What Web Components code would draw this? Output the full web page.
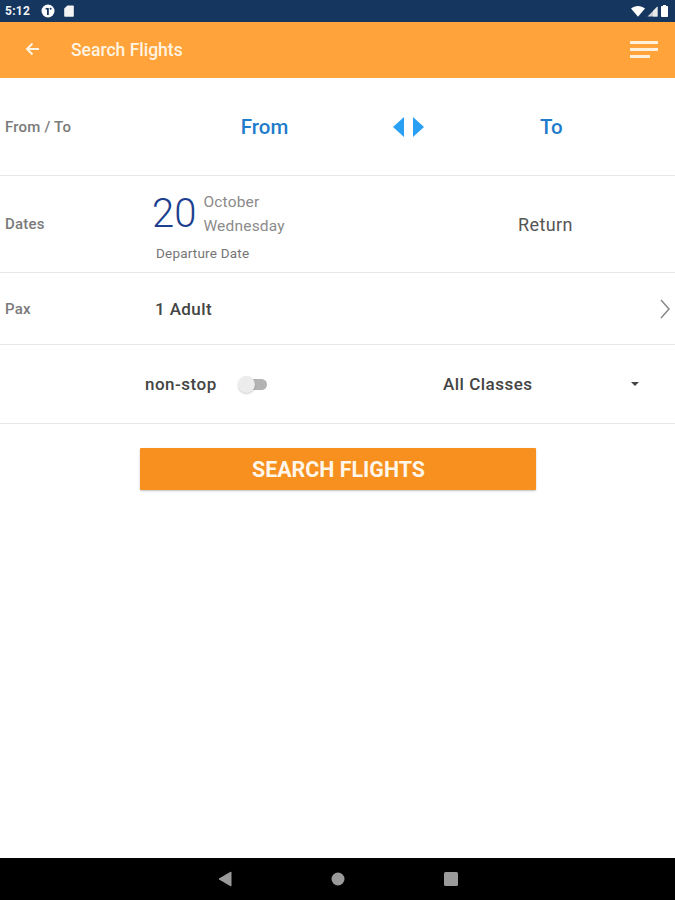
<!DOCTYPE html>
<html>
<head>
<meta charset="utf-8">
<title>Search Flights</title>
<style>
  html, body { margin: 0; height: 100%; }
  body { font-family: Roboto, "Liberation Sans", sans-serif; background: #fff; }
  #app { display: flex; flex-direction: column; height: 900px; overflow: hidden; }
</style>
</head>
<body>
<div id="app">
  <status-bar></status-bar>
  <app-bar>Search Flights</app-bar>
  <form-row label="From / To" height="98">
    <route-picker></route-picker>
  </form-row>
  <form-row label="Dates" height="97">
    <date-picker></date-picker>
  </form-row>
  <form-row label="Pax" height="72">
    <pax-picker></pax-picker>
  </form-row>
  <form-row height="79">
    <options-picker></options-picker>
  </form-row>
  <search-button>SEARCH FLIGHTS</search-button>
  <nav-bar></nav-bar>
</div>

<script>
class StatusBar extends HTMLElement {
  constructor() {
    super();
    this.attachShadow({ mode: "open" });
    this.shadowRoot.innerHTML = `
      <style>
        :host {
          display: flex;
          align-items: center;
          flex: none;
          height: 22px;
          padding: 0 7px 0 5px;
          box-sizing: border-box;
          background: #14365f;
          color: #f1f4f7;
        }
        .time { font-size: 12px; font-weight: 700; letter-spacing: .3px; width: 36px; }
        .left { display: flex; align-items: center; gap: 9px; }
        .right { display: flex; align-items: center; gap: 2px; margin-left: auto; }
        svg { display: block; }
      </style>
      <span class="time">5:12</span>
      <div class="left">
        <svg width="14" height="14" viewBox="0 0 14 14">
          <circle cx="7" cy="7" r="6.5" fill="#fff"/>
          <path d="M4.600 4h3.200v7H6V5.600H4.600z" fill="#14365f"/>
          <circle cx="9.600" cy="4.800" r="1" fill="#14365f"/>
        </svg>
        <svg width="10" height="12" viewBox="0 0 10 12">
          <path d="M3.400 0.500H9a.8.8 0 0 1 .8.8v9.600a.8.8 0 0 1-.8.8H1a.8.8 0 0 1-.8-.8V3.600z" fill="#f4f4f4"/>
        </svg>
      </div>
      <div class="right">
        <svg width="14" height="11" viewBox="0 0 14 11">
          <path d="M0 2.600C3.800-.8 10.200-.8 14 2.600L7 10.800z" fill="#fff"/>
        </svg>
        <svg width="11" height="11" viewBox="0 0 11 11">
          <path d="M10.500.5v10H.5z" fill="#c9ced4"/>
          <path d="M10.500.5v10H6V5z" fill="#e9e9e9"/>
        </svg>
        <svg width="7" height="12" viewBox="0 0 7 12" style="margin-left:1px">
          <path d="M2 0h3v1h1.200a.8.8 0 0 1 .8.8v9.400a.8.8 0 0 1-.8.800H.8a.8.8 0 0 1-.8-.8V1.800A.8.8 0 0 1 .8 1H2z" fill="#fff"/>
        </svg>
      </div>
    `;
  }
}
customElements.define("status-bar", StatusBar);

class AppBar extends HTMLElement {
  constructor() {
    super();
    this.attachShadow({ mode: "open" });
    this.shadowRoot.innerHTML = `
      <style>
        :host {
          display: flex;
          align-items: center;
          flex: none;
          height: 56px;
          padding: 0 17px 0 25px;
          box-sizing: border-box;
          background: #ffa33a;
          color: #fff3e2;
        }
        .title { font-size: 17.500px; font-weight: 500; margin-left: 31px; }
        .menu { margin-left: auto; display: block; }
        .back { display: block; margin-top: -2px; }
      </style>
      <svg class="back" width="15" height="14" viewBox="0 0 15 14" fill="none" stroke="#fff3e2" stroke-width="2">
        <path d="M14 7H2M7.500 1.500L2 7l5.500 5.500"/>
      </svg>
      <span class="title"><slot></slot></span>
      <svg class="menu" width="28" height="18" viewBox="0 0 28 18" fill="#fff0dc">
        <rect y="0" width="28" height="3"/>
        <rect y="7" width="28" height="3"/>
        <rect y="14" width="20" height="3"/>
      </svg>
    `;
  }
}
customElements.define("app-bar", AppBar);

class FormRow extends HTMLElement {
  constructor() {
    super();
    this.attachShadow({ mode: "open" });
    const label = this.getAttribute("label") || "";
    const height = this.getAttribute("height") || "72";
    this.shadowRoot.innerHTML = `
      <style>
        :host {
          display: flex;
          align-items: center;
          flex: none;
          height: ${height}px;
          box-sizing: border-box;
          border-bottom: 1px solid #e8e8e8;
        }
        .label { flex: none; width: 145px; padding-left: 5px; box-sizing: border-box; font-size: 15px; font-weight: 500; letter-spacing: .2px; color: #7a7a7a; }
        .content { flex: 1; min-width: 0; height: 100%; }
      </style>
      <span class="label">${label}</span>
      <div class="content"><slot></slot></div>
    `;
  }
}
customElements.define("form-row", FormRow);

class RoutePicker extends HTMLElement {
  constructor() {
    super();
    this.attachShadow({ mode: "open" });
    this.shadowRoot.innerHTML = `
      <style>
        :host {
          display: grid;
          grid-template-columns: 239px 62px 1fr;
          align-items: center;
          height: 100%;
          color: #1f7ccb;
          font-size: 20.500px;
          font-weight: 500;
        }
        .from { text-align: center; }
        .to { padding-left: 94px; }
        svg { display: block; }
        .swap { margin-left: 9px; }
      </style>
      <span class="from">From</span>
      <svg class="swap" width="31" height="20" viewBox="0 0 31 20" fill="#2aa0f5">
        <path d="M11 0v20L0 10z"/>
        <path d="M20 0v20l11-10z"/>
      </svg>
      <span class="to">To</span>
    `;
  }
}
customElements.define("route-picker", RoutePicker);

class DatePicker extends HTMLElement {
  constructor() {
    super();
    this.attachShadow({ mode: "open" });
    this.shadowRoot.innerHTML = `
      <style>
        :host {
          display: flex;
          align-items: center;
          height: 100%;
        }
        .depart { flex: none; width: 373px; padding: 2px 0 0 7px; box-sizing: border-box; }
        .top { display: flex; align-items: center; gap: 7px; }
        .day { font-size: 40px; line-height: 44px; color: #1c3f8f; font-weight: 300; }
        .month { font-size: 15.500px; line-height: 24px; letter-spacing: .2px; color: #8b8b8b; }
        .caption { font-size: 13.500px; letter-spacing: .2px; color: #757575; margin: 7px 0 0 4px; }
        .return { font-size: 18px; letter-spacing: .4px; color: #555; }
      </style>
      <div class="depart">
        <div class="top">
          <span class="day">20</span>
          <div class="month">October<br>Wednesday</div>
        </div>
        <div class="caption">Departure Date</div>
      </div>
      <span class="return">Return</span>
    `;
  }
}
customElements.define("date-picker", DatePicker);

class PaxPicker extends HTMLElement {
  constructor() {
    super();
    this.attachShadow({ mode: "open" });
    this.shadowRoot.innerHTML = `
      <style>
        :host {
          display: flex;
          align-items: center;
          height: 100%;
          padding: 0 5px 0 10px;
          box-sizing: border-box;
          font-size: 17px;
          font-weight: 500;
          letter-spacing: .4px;
          color: #444;
        }
        svg { display: block; margin: 0 0 0 auto; }
      </style>
      <span>1 Adult</span>
      <svg width="10" height="20" viewBox="0 0 10 20" fill="none" stroke="#888" stroke-width="1.500">
        <path d="M1 1l8 9-8 9"/>
      </svg>
    `;
  }
}
customElements.define("pax-picker", PaxPicker);

class ToggleSwitch extends HTMLElement {
  constructor() {
    super();
    this.attachShadow({ mode: "open" });
    this.shadowRoot.innerHTML = `
      <style>
        :host { display: flex; align-items: center; width: 30px; height: 18px; }
        .track { width: 24px; height: 11px; margin-left: 5px; border-radius: 6px; background: #b3b3b3; }
        .thumb {
          position: absolute;
          width: 17px;
          height: 17px;
          border-radius: 50%;
          background: #ececec;
          box-shadow: 0 1px 2px rgba(0,0,0,.2);
        }
      </style>
      <span class="thumb"></span>
      <span class="track"></span>
    `;
  }
}
customElements.define("toggle-switch", ToggleSwitch);

class OptionsPicker extends HTMLElement {
  constructor() {
    super();
    this.attachShadow({ mode: "open" });
    this.shadowRoot.innerHTML = `
      <style>
        :host {
          display: flex;
          align-items: center;
          height: 100%;
          font-size: 17px;
          font-weight: 500;
          letter-spacing: .5px;
          color: #444;
        }
        .stop { display: flex; align-items: center; gap: 21px; width: 298px; flex: none; }
        .cls { display: flex; align-items: center; flex: 1; }
        .caret {
          width: 0;
          height: 0;
          margin: 0 0 0 98px;
          border: 4.500px solid transparent;
          border-top: 4.500px solid #444;
          border-bottom: 0;
        }
      </style>
      <div class="stop">
        <span>non-stop</span>
        <toggle-switch></toggle-switch>
      </div>
      <div class="cls">
        <span>All Classes</span>
        <span class="caret"></span>
      </div>
    `;
  }
}
customElements.define("options-picker", OptionsPicker);

class SearchButton extends HTMLElement {
  constructor() {
    super();
    this.attachShadow({ mode: "open" });
    this.shadowRoot.innerHTML = `
      <style>
        :host {
          display: flex;
          justify-content: center;
          flex: none;
          padding-top: 24px;
        }
        button {
          width: 396px;
          height: 42px;
          border: 0;
          border-radius: 1px;
          background: #f7901e;
          color: #fff6ea;
          font: 700 21.400px Roboto, "Liberation Sans", sans-serif;
          box-shadow: 0 1px 2px rgba(0,0,0,.25);
          padding: 0 0 0 2px;
        }
      </style>
      <button><slot></slot></button>
    `;
  }
}
customElements.define("search-button", SearchButton);

class NavBar extends HTMLElement {
  constructor() {
    super();
    this.attachShadow({ mode: "open" });
    this.shadowRoot.innerHTML = `
      <style>
        :host {
          display: flex;
          align-items: center;
          justify-content: center;
          gap: 99px;
          flex: none;
          height: 42px;
          margin-top: auto;
          background: #000;
          box-sizing: border-box;
        }
        svg { display: block; }
      </style>
      <svg width="14" height="16" viewBox="0 0 14 16"><path d="M13 1v14L1 8z" fill="#9a9a9a" stroke="#9a9a9a" stroke-linejoin="round"/></svg>
      <svg width="14" height="14" viewBox="0 0 14 14"><circle cx="7" cy="7" r="6.500" fill="#9a9a9a"/></svg>
      <svg width="14" height="14" viewBox="0 0 14 14"><rect width="14" height="14" rx="1.500" fill="#9a9a9a"/></svg>
    `;
  }
}
customElements.define("nav-bar", NavBar);
</script>
</body>
</html>
